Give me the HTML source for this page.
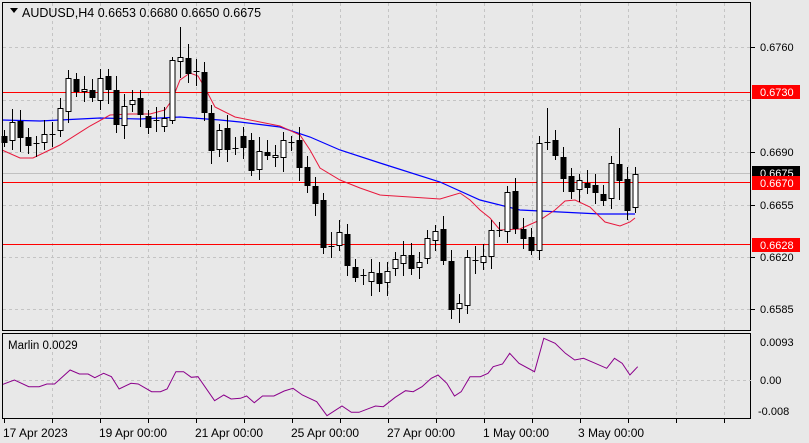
<!DOCTYPE html>
<html><head><style>
html,body{margin:0;padding:0;background:#e8e8e8;}
svg{display:block;font-family:"Liberation Sans",sans-serif;}
</style></head><body>
<svg id="s" width="809" height="443" xmlns="http://www.w3.org/2000/svg">
<rect width="809" height="443" fill="#e8e8e8"/>
<g id="grid" stroke="#c4c4c4" stroke-dasharray="3,3" stroke-width="1"></g>
<line x1="2" y1="92.5" x2="751" y2="92.5" stroke="#ff0000"/>
<line x1="2" y1="182.5" x2="751" y2="182.5" stroke="#ff0000"/>
<line x1="2" y1="244.5" x2="751" y2="244.5" stroke="#ff0000"/>
<line x1="2" y1="173.5" x2="751" y2="173.5" stroke="#c0c0c0"/>
<polyline id="blue" fill="none" stroke="#0000ff" stroke-width="1.2" points="2,120 40,121 100,118 140,119 180,117 220,120 240,122 280,127 310,137 340,150 380,163 440,182 480,200 520,210 560,212 600,214 635,214"/>
<polyline id="red" fill="none" stroke="#e8183c" stroke-width="1" points="2,150 20,158 33,158 60,145 90,126 110,115 130,114 150,114 165,110 172,100 180,80 190,73 198,76 205,88 215,107 235,117 260,122 280,126 300,135 310,150 320,168 340,180 360,188 380,195 410,197 440,199 460,193 470,200 480,210 490,218 500,230 520,229 540,220 555,210 565,201 575,200 590,207 605,222 620,226 630,222 635,218"/>
<g id="candles"></g>
<rect x="2.5" y="2.5" width="748" height="328" fill="none" stroke="#000"/>
<rect x="2.5" y="333.5" width="748" height="85" fill="none" stroke="#000"/>
<line x1="5" y1="380.5" x2="751" y2="380.5" stroke="#c4c4c4" stroke-dasharray="3,3"/>
<polyline id="marlin" fill="none" stroke="#8b008b" stroke-width="1"/>
<path d="M10 8 L18 8 L14 13 Z" fill="#000"/>
<text x="22" y="17" font-size="12.5">AUDUSD,H4  0.6653 0.6680 0.6650 0.6675</text>
<text x="8" y="349" font-size="11.5">Marlin 0.0029</text>
<g font-size="11" fill="#000">
<text x="760" y="51">0.6760</text>
<text x="760" y="156">0.6690</text>
<text x="760" y="209">0.6655</text>
<text x="760" y="261">0.6620</text>
<text x="760" y="313">0.6585</text>
<text x="760" y="346">0.0093</text>
<text x="760" y="384">0.00</text>
<text x="758" y="415">-0.008</text>
</g>
<g stroke="#000"><line x1="751" y1="47.5" x2="755" y2="47.5"/><line x1="751" y1="152.5" x2="755" y2="152.5"/><line x1="751" y1="205.5" x2="755" y2="205.5"/><line x1="751" y1="257.5" x2="755" y2="257.5"/><line x1="751" y1="309.5" x2="755" y2="309.5"/></g>
<rect x="752" y="85" width="48" height="14" fill="#ff0000"/><text x="760" y="96" font-size="11" fill="#fff">0.6730</text>
<rect x="752" y="166" width="48" height="12" fill="#000"/><text x="760" y="177" font-size="11" fill="#fff">0.6675</text>
<rect x="752" y="176" width="48" height="14" fill="#ff0000"/><text x="760" y="187" font-size="11" fill="#fff">0.6670</text>
<rect x="752" y="238" width="48" height="14" fill="#ff0000"/><text x="760" y="249" font-size="11" fill="#fff">0.6628</text>
<g font-size="12" fill="#000">
<text x="3" y="437">17 Apr 2023</text>
<text x="99" y="437">19 Apr 00:00</text>
<text x="195" y="437">21 Apr 00:00</text>
<text x="291" y="437">25 Apr 00:00</text>
<text x="387" y="437">27 Apr 00:00</text>
<text x="483" y="437">1 May 00:00</text>
<text x="578" y="437">3 May 00:00</text>
</g>
<g stroke="#000" id="ticks"></g>
</svg>
<script>
var NS="http://www.w3.org/2000/svg";
function el(p,t,a){var e=document.createElementNS(NS,t);for(var k in a)e.setAttribute(k,a[k]);p.appendChild(e);return e;}
var g=document.getElementById('grid');
for(var x=52;x<750;x+=48){el(g,'line',{x1:x+.5,y1:3,x2:x+.5,y2:330});el(g,'line',{x1:x+.5,y1:334,x2:x+.5,y2:418});}
[47,100,152,205,257,309].forEach(function(y){el(g,'line',{x1:3,y1:y+.5,x2:750,y2:y+.5});});
var tk=document.getElementById('ticks');
for(var x=4;x<750;x+=48){el(tk,'line',{x1:x+.5,y1:419,x2:x+.5,y2:423});}
var C=[[4,136,142,0],[12,122,140,1],[20,121,137,0],[28,137,145,0],[36,143,143,0],[44,134,142,1],[52,134,134,0],[60,108,130,1],[68,78,111,1],[76,79,91,0],[84,89,91,1],[92,90,97,0],[100,78,100,1],[108,76,89,0],[116,90,124,0],[124,106,125,1],[132,100,104,1],[140,98,114,0],[148,116,127,0],[156,120,120,0],[164,118,126,1],[172,60,120,1],[180,57,61,1],[188,58,73,0],[196,71,71,0],[204,72,112,0],[211,113,150,0],[219,130,149,1],[227,128,149,0],[235,148,148,0],[243,136,147,0],[251,140,170,0],[259,151,169,1],[267,152,155,0],[275,155,157,1],[283,140,157,1],[291,142,142,0],[299,140,167,0],[307,167,185,0],[315,186,203,0],[323,200,247,0],[331,246,246,0],[339,232,245,1],[347,234,265,0],[355,267,277,0],[363,275,275,0],[371,272,281,1],[379,273,283,0],[387,271,282,1],[395,259,268,1],[403,255,263,1],[411,255,268,0],[419,262,267,1],[427,238,258,1],[435,231,240,1],[443,229,260,0],[451,261,309,0],[459,303,308,1],[467,257,305,1],[475,260,260,0],[483,256,262,1],[491,230,256,1],[499,230,230,0],[507,192,231,1],[515,191,228,0],[523,229,238,0],[531,237,250,0],[539,143,250,1],[547,142,142,0],[555,140,155,0],[563,157,178,0],[571,176,191,0],[579,180,189,1],[587,183,187,0],[595,185,192,0],[603,194,200,0],[611,163,198,1],[619,164,180,0],[627,179,210,0],[635,174,207,1]];
var W={180:[27,78],547:[108,150],619:[128,200],172:[57,124],555:[130,160],635:[167,213]};
var cg=document.getElementById('candles');
C.forEach(function(c,i){var x=c[0]+.5,t=c[1],b=c[2];var h=b-t;var wu=6+((i*7)%9),wd=5+((i*5)%11);
var y1=t-wu,y2=b+wd;if(W[c[0]]){y1=W[c[0]][0];y2=W[c[0]][1];}
el(cg,'line',{x1:x,y1:y1,x2:x,y2:y2,stroke:'#000'});
if(h<2){el(cg,'line',{x1:x-3,y1:t+.5,x2:x+3,y2:t+.5,stroke:'#000'});}
else el(cg,'rect',{x:x-2.5,y:t+.5,width:5,height:h,fill:c[3]?'#fff':'#000',stroke:'#000'});});
var M=[[0,193],[22,180],[50,200],[70,200],[85,192],[100,192],[130,150],[148,162],[165,162],[178,173],[195,160],[210,170],[225,207],[248,190],[262,192],[288,215],[305,215],[318,207],[335,155],[350,155],[365,172],[378,170],[410,242],[428,225],[442,237],[460,235],[472,228],[487,248],[503,228],[525,228],[545,213],[562,205],[580,225],[608,245],[628,287],[657,258],[675,277],[690,277],[710,265],[722,258],[737,260],[760,232],[780,212],[795,215],[812,200],[830,175],[843,165],[860,190],[875,228],[888,215],[905,170],[925,170],[940,160],[950,140],[968,132],[982,100],[1000,130],[1030,155],[1048,55],[1070,70],[1090,100],[1108,120],[1125,115],[1145,128],[1170,145],[1185,115],[1200,130],[1215,165],[1230,140]];
document.getElementById('marlin').setAttribute('points',M.map(function(p){return (p[0]/1.938+3).toFixed(1)+','+(p[1]/3+320).toFixed(1);}).join(' '));
</script>
</body></html>
